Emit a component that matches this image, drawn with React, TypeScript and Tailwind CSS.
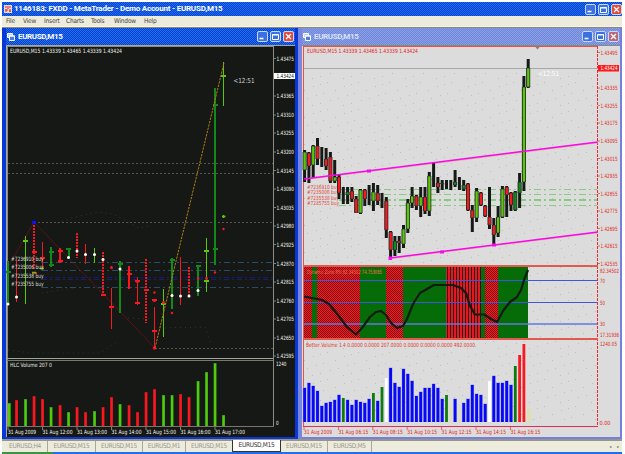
import React from "react";

const FONT = "font-['DejaVu_Sans_Condensed','DejaVu_Sans',sans-serif]";

type Bar = [x: number, top: number, bottom: number, color: string, ticks?: number[], dot?: number];

const G = "#5ac80a";
const D = "#128a18";
const R = "#f81820";

const bars: Bar[] = [
  [8, 261, 304, D, [272], 304],
  [16.5, 260, 302, R, [], 297],
  [25.5, 236, 304, G, [241]],
  [34, 222, 270, R, [252, 273]],
  [42.5, 242, 269, R, [258]],
  [51, 247, 267, D, [252, 265]],
  [60, 248, 263, R, [251, 261]],
  [68.5, 248, 258, D, [249], 257.5],
  [77, 233, 258, R, [], 251],
  [85.5, 244, 264, R, [], 254.5],
  [94.5, 248, 263, G, [], 254.5],
  [103, 252, 296, R, [295], 259.5],
  [111.5, 288, 329, R, [307]],
  [120, 261, 313, D, [264], 269],
  [129, 266, 289, R, [274]],
  [137.5, 277, 305, R, [281, 303]],
  [146, 259, 323, R, [290]],
  [154.5, 307, 348, R, [331, 300]],
  [163.5, 289, 337, G, [304]],
  [172, 258, 309, D, [260], 295.5],
  [180.5, 257, 305, R, [], 296],
  [189, 267, 296, R, [], 296],
  [198, 265, 296, D, [266], 290.5],
  [206.5, 238, 292, G, [251, 281]],
  [215, 88, 265, D, [105, 249]],
  [223.5, 62, 106, G, [76]],
];

const leftVolume: [number, string][] = [
  [403, G], [400, R], [399, G], [396, R], [399, R], [407, G], [405, R], [412, G], [407, R],
  [412, R], [411, G], [407, R], [397, R], [404, G], [405, R], [412, R], [392, R], [389, R],
  [395, G], [395, G], [394, R], [397, R], [381, G], [372, G], [363, G], [415, G],
];

const leftPrices: [number, string][] = [
  [58.5, "1.43475"], [96, "1.43365"], [115, "1.43310"], [133, "1.43255"], [152, "1.43200"],
  [170.5, "1.43145"], [189, "1.43090"], [207.5, "1.43035"], [226, "1.42980"], [244.5, "1.42925"],
  [263.5, "1.42870"], [282, "1.42815"], [301, "1.42760"], [319, "1.42705"], [338, "1.42650"],
  [356, "1.42595"],
];

// wick top, wick bottom, body top, body bottom, body colour
type Candle = [number, number, number?, number?, string?];

const candles: Candle[] = [
  [150, 182, 152, 170, G], [152, 183, 153, 166, R], [145, 178, 146, 165, G], [138, 165, 146, 159, R],
  [147, 167], [148, 170, 159, 166, R], [152, 183, 157, 181, R], [160, 183, 177, 181, G],
  [175, 199, 177, 193, R], [187, 204], [187, 204, 192, 195, D], [187, 202, 191, 199, R],
  [196, 213, 199, 213, R], [189, 214, 190, 213, G], [189, 206, 190, 199, R], [185, 205],
  [183, 211, 192, 201, G], [185, 205, 193, 201, R], [193, 208], [197, 238, 201, 230, R],
  [231, 258, 232, 250, R], [236, 256, 241, 250, D], [236, 253, 241, 243, R], [225, 248, 229, 244, G],
  [199, 233, 203, 229, G], [187, 208, 196, 203, G], [195, 210, 196, 206, R], [187, 217, 197, 206, G],
  [187, 214, 197, 211, R], [172, 216, 176, 211, G], [163, 187], [177, 193, 183, 187, R],
  [180, 190, 183, 184, D], [180, 189], [180, 190], [170, 187, 182, 185, D], [177, 190],
  [180, 191, 185, 189, D], [183, 211, 184, 210, R], [205, 232, 210, 218, R], [188, 222, 191, 218, G],
  [192, 206, 193, 205, R], [205, 217, 206, 216, R], [187, 229, 217, 225, R], [218, 246, 225, 235, R],
  [206, 237, 217, 233, G], [186, 218, 189, 217, G], [186, 217, 187, 195, R], [192, 211, 193, 205, R],
  [191, 211, 192, 210, D], [173, 208, 182, 193, D], [76, 191, 87, 182, G], [59, 88, 68, 87, G],
];

const B = "#0808f8";
const C = "#dedebc";
const W = "#ffffff";
const K = "#107a10";

const rightVolume: [number, string][] = [
  [388, B], [383, B], [386, B], [391, B], [406, B], [403, B], [402, B], [400, B], [395, B],
  [398, K], [400, B], [405, B], [400, B], [402, B], [403, B], [399, B], [393, K], [401, B],
  [387, K], [378, W], [368, B], [383, B], [387, B], [369, B], [374, B], [381, B], [396, B],
  [392, B], [388, B], [388, B], [384, B], [388, B], [399, B], [395, K], [405, C], [399, B],
  [405, C], [403, B], [399, B], [385, B], [394, B], [395, B], [404, B], [381, W], [376, B],
  [383, B], [383, B], [381, B], [385, B], [366, K], [355, R], [344, R],
];

const rightPrices: [number, string][] = [
  [52.5, "1.43495"], [88, "1.43335"], [105.5, "1.43255"], [123, "1.43175"], [141, "1.43095"],
  [158.5, "1.43015"], [176, "1.42935"], [193.5, "1.42855"], [211, "1.42775"], [228.5, "1.42695"],
  [246, "1.42615"], [263.5, "1.42535"],
];

const zones: [number, number, string][] = [
  [304, 312, "url(#check)"], [312, 317, "#066c08"], [317, 360, "url(#check)"],
  [360, 386, "#066c08"], [386, 403, "url(#check)"], [403, 446, "#066c08"],
  [446, 481, "url(#stripe)"], [481, 485, "#066c08"], [485, 498, "url(#check)"],
  [498, 528, "#066c08"],
];

const orders = ["#7236910 buy", "#7235006 buy", "#7235538 buy", "#7235755 buy"];

interface LabelProps {
  x: number;
  y: number;
  w: number;
  fill: string;
  size?: number;
  children: string;
}

// y is the middle of the text line, w its printed width
const Label: React.FC<LabelProps> = ({ x, y, w, fill, size = 5.8, children }) => (
  <text x={x} y={y + size * 0.36} fontSize={size} fill={fill} textLength={w} lengthAdjust="spacingAndGlyphs">
    {children}
  </text>
);

const LeftChart: React.FC = () => (
  <svg viewBox="6 45 289 392" className="block h-[392px] w-[289px] overflow-visible bg-[#151814]">
    <g shapeRendering="crispEdges" fill="none">
      <path d="M6 45.5H295M6.5 45V437" stroke="#aca899" />
      <path d="M7.5 426V46.5H273.5V426" stroke="#8c8c84" />
      <path d="M7 358.5H273" stroke="#9aa89a" />
      <path d="M7 360.5H273M7 426.5H274" stroke="#77776f" />
      <path d="M8 163.5H273M8 173.5H273M34 222.5H273M155 348.5H273" stroke="#56564c" strokeDasharray="2 2" />
      <path d="M42 262.5H273M42 270.5H273M42 287.5H273" stroke="#2d4a68" strokeDasharray="6 3 2 3" />
      <path d="M42 277.5H273M42 279.5H273" stroke="#1a1a78" strokeDasharray="5 3 2 3" />
    </g>
    <path
      d="M57 223L75 217L98 212L113 214L128 222L139 228L150 226M42 293L75 288M8 350L30 353H100L118 341M128 318L150 319M160 328L205 327L211 344"
      fill="none"
      stroke="#33352e"
      strokeDasharray="1 4"
    />
    <path d="M8 267L34 222L155 348" fill="none" stroke="#6a1414" strokeWidth=".8" />
    {bars.map(([x, top, bottom, color, ticks = []], i) => (
      <g key={i} stroke={color} shapeRendering="crispEdges">
        <path
          d={`M${x} ${top}V${bottom}`}
          strokeWidth={color === D ? 2 : 1.3}
          strokeDasharray={[3, 8, 11, 16, 21].includes(i) ? "2 1" : undefined}
        />
        {ticks.map((t) => (
          <path key={t} d={`M${x - 2.5} ${t}H${x + 2.5}`} strokeWidth="1.2" />
        ))}
      </g>
    ))}
    <path d="M155 348L224 63" stroke="#b07c18" strokeDasharray="2.4 1" />
    <g fill={R}>
      <circle cx="111.5" cy="267.5" r="1.5" />
      <circle cx="137.5" cy="281.5" r="1.5" />
      <circle cx="154.5" cy="292.5" r="1.2" />
      <circle cx="154.5" cy="300.5" r="1.5" />
      <circle cx="163.5" cy="302.5" r="1.5" />
      <circle cx="154.5" cy="348" r="1.8" />
      <circle cx="172" cy="313" r="1.2" />
      <circle cx="198" cy="278.5" r="1.2" />
      <circle cx="206.5" cy="278.5" r="1.4" />
      <circle cx="215" cy="272.5" r="1.2" />
      <circle cx="223.5" cy="229" r="1.2" />
    </g>
    <path d="M222 216.5H225.5M223.5 215V218M32 272.5H36M40 268.5H44" stroke={G} strokeWidth="1.5" />
    <circle cx="34" cy="222.5" r="2" fill="#1010ff" />
    {bars.map(([x, , , , , dot]) => dot && <circle key={x} cx={x} cy={dot} r="1.5" fill="#fff" />)}
    {orders.map((order, i) => (
      <Label key={order} x={11} y={[259, 267.2, 276, 284][i]} w={32.5} fill="#dcdcd8">{order}</Label>
    ))}
    <Label x={10} y={51} w={112} fill="#f0f0ec">EURUSD,M15  1.43339 1.43465 1.43339 1.43424</Label>
    <Label x={233.5} y={80.5} w={21} fill="#d8d8d8" size={7}>&lt;12:51</Label>
    {leftPrices.map(([y, price]) => (
      <g key={price}>
        <path d={`M274 ${y}h2`} stroke="#99998f" strokeWidth=".8" />
        <Label x={276.5} y={y} w={17.5} fill="#f4f4f0">{price}</Label>
      </g>
    ))}
    <rect x="274" y="73" width="21" height="6" fill="#fff" />
    <Label x={276.5} y={76} w={17.5} fill="#222">1.43424</Label>
    {leftVolume.map(([top, color], i) => {
      const x = bars[i][0];
      return (
        <g key={x}>
          <rect x={Math.max(8, x - 1.5)} y={top} width="3" height={426 - top} fill={color === G ? D : "#a01418"} />
          <rect x={Math.max(8, x - 1)} y={top + 0.5} width="2.2" height={425.5 - top} fill={color} />
        </g>
      );
    })}
    <Label x={10} y={365} w={42} fill="#e8e8e4">HLC Volume 207 0</Label>
    <Label x={276} y={364} w={10.5} fill="#f4f4f0">1240</Label>
    <Label x={276} y={423} w={2.6} fill="#f4f4f0">0</Label>
    {["2009", "12:00", "13:00", "14:00", "15:00", "16:00", "17:00"].map((t, i) => (
      <g key={t}>
        <path d={`M${8 + i * 34.5} 427v3`} stroke="#99998f" strokeWidth=".8" />
        <Label x={8 + i * 34.5} y={432} w={i ? 30 : 28} fill="#f4f4f0">{`31 Aug ${t}`}</Label>
      </g>
    ))}
  </svg>
);

const RightChart: React.FC = () => (
  <svg viewBox="302 45 318 392" className="block h-[392px] w-[318px] overflow-visible bg-[#dcdcdc]">
    <defs>
      <pattern id="grain" width="31" height="27" patternUnits="userSpaceOnUse">
        <path
          d="M3 5.5h1M10 3.5h1M17 1.5h1M25 9.5h1M6 14.5h1M13 12.5h1M20 19.5h1M28 17.5h1M2 24.5h1M10 22.5h1"
          stroke="#c2beb2"
        />
      </pattern>
      <pattern id="check" width="2" height="2" patternUnits="userSpaceOnUse">
        <path d="M0 0h2v2h-2z" fill="#ff1820" />
        <path d="M0 0h1v1h-1zM1 1h1v1h-1z" fill="#741216" />
      </pattern>
      <pattern id="stripe" width="3" height="2" patternUnits="userSpaceOnUse">
        <path d="M0 0h3v2h-3z" fill="#e01a20" />
        <path d="M0 0h1v2h-1z" fill="#301010" />
      </pattern>
    </defs>
    <rect x="304" y="72" width="294" height="350" fill="url(#grain)" />
    <g shapeRendering="crispEdges" fill="none">
      <path d="M302 45.5H620" stroke="#8c887c" />
      <path d="M303.5 46.5V426M303 46.5H598" stroke="#e85048" />
      <path d="M597.5 46V426" stroke="#e02c38" strokeDasharray="3 1" />
      <path d="M304 68.5H598" stroke="#a4aaa4" />
      <path
        d="M339 189.5H597M339 194.5H597M339 199.5H597M339 200.5H597M339 205.5H597"
        stroke="#86cc84"
        strokeDasharray="7 3 2 3"
      />
    </g>
    <path d="M535 46.5h5l-2.5 3z" fill="#77838c" />
    <path d="M304 179.5L598 142.5M390 258.5L598 232.5" stroke="#e8b49c" strokeWidth="1.6" />
    {orders.map((order, i) => (
      <Label key={order} x={307} y={[186.5, 191.5, 197.5, 203][i]} w={32} fill="#e04840" size={5.6}>{order}</Label>
    ))}
    {candles.map(([top, bottom, bodyTop, bodyBottom, color], i) => {
      const x = 304.5 + i * 4.3;
      return (
        <g key={i}>
          <rect x={x - 1.4} y={top} width="3" height={bottom - top} fill="#161a16" />
          {bodyTop && bodyBottom && (
            <>
              <rect x={x - 1.9} y={bodyTop} width="4" height={bodyBottom - bodyTop} fill="#242c24" />
              <rect x={x - 1} y={bodyTop + 0.4} width="2.3" height={bodyBottom - bodyTop - 0.8} fill={color} />
            </>
          )}
        </g>
      );
    })}
    <path d="M304 179L598 142M390 258L598 232" stroke="#f808f0" strokeWidth="1.5" />
    <path d="M367 169.5h4v3h-4zM440 250.5h4v3h-4zM492 243.5h4v3h-4zM388.5 256.5h3.5v3.5h-3.5z" fill="#f808f0" />
    <Label x={307} y={51} w={111} fill="#e02820">EURUSD,M15  1.43339 1.43465 1.43339 1.43424</Label>
    <Label x={538} y={73} w={21} fill="#fff" size={7}>&lt;12:51</Label>
    {rightPrices.map(([y, price]) => (
      <g key={price}>
        <path d={`M598 ${y}h2`} stroke="#e84840" strokeWidth=".8" />
        <Label x={600.5} y={y} w={17} fill="#e02820">{price}</Label>
      </g>
    ))}
    <rect x="598" y="65" width="21" height="6.5" fill="#fc1818" />
    <Label x={600.5} y={68.3} w={17} fill="#fff">1.43424</Label>

    <g shapeRendering="crispEdges">
      {zones.map(([from, to, fill]) => (
        <rect key={from} x={from} y={267} width={to - from} height={72} fill={fill} />
      ))}
      <path d="M303 266H598M303 339H598" stroke="#e05a50" strokeWidth="2" />
      <path d="M304 280.5H597M304 302.5H597" stroke="#4054e4" />
      <path d="M304 323.5H597M304 324.5H597" stroke="#6078e0" strokeOpacity=".75" />
    </g>
    <path
      d="M304 296.5L312 298L322 300L329 304L338 315L347 327L356 334.5L362 328L370 317L376 312L381 311L386 315L391 323L397 328L403 326L407 319L413 304L420 293L427 289L434 285H453L461 288L466 293L470 306L475 314.5H484L491 319L497 322L503 311L510 302L517 297L521 290L524 280L528 270"
      fill="none"
      stroke="#141a14"
      strokeWidth="2.2"
      strokeLinejoin="round"
    />
    <Label x={307} y={272} w={75} fill="#f07048">Dynamic Zone RSI 82.34502 74.753065</Label>
    <Label x={600} y={270.5} w={19} fill="#e02820">82.34502</Label>
    <Label x={600} y={280.5} w={5} fill="#e02820">70</Label>
    <Label x={600} y={302.5} w={5} fill="#e02820">50</Label>
    <Label x={600} y={324} w={5} fill="#e02820">30</Label>
    <Label x={600} y={334.5} w={19} fill="#e02820">17.31936</Label>

    {rightVolume.map(([top, color], i) => {
      const x = 304.5 + i * 4.3;
      return (
        <g key={i}>
          {color === B && <rect x={x - 1.7} y={top - 0.5} width="3.6" height={422.5 - top} fill="#9a9ee0" />}
          <rect x={x - 1.3} y={top} width="2.8" height={422 - top} fill={color} />
        </g>
      );
    })}
    <rect x="526.5" y="408" width="5" height="15" rx="2" fill={C} />
    <path d="M303 426.5H598" stroke="#e02c58" shapeRendering="crispEdges" />
    <Label x={306} y={345} w={169} fill="#e03830">
      Better Volume 1.4 0.0000 0.0000 207.0000 0.0000 0.0000 0.0000 492.0000
    </Label>
    <Label x={600} y={343.5} w={17} fill="#e02820">1240.05</Label>
    <Label x={599.5} y={422.5} w={11} fill="#e02820">0.00</Label>
    {["2009", "06:15", "08:15", "10:15", "12:15", "14:15", "16:15"].map((t, i) => (
      <g key={t}>
        <path d={`M${304 + i * 34.4} 427v3`} stroke="#e84840" strokeWidth=".8" />
        <Label x={304 + i * 34.4} y={432} w={i ? 30 : 28} fill="#e02820">{`31 Aug ${t}`}</Label>
      </g>
    ))}
  </svg>
);

const WindowButtons: React.FC<{ faded?: boolean }> = ({ faded = false }) => {
  const base = "flex h-[11px] w-[11px] items-center justify-center rounded-[2px] border border-[#c8d8f8]";
  return (
    <div className="flex gap-[2px]">
      <span className={`${base} bg-[#3a70e0]`}>
        <svg viewBox="0 0 9 9" className="h-[9px] w-[9px]">
          <path d="M1.5 6.5h4" stroke="#fff" strokeWidth="1.6" />
        </svg>
      </span>
      <span className={`${base} bg-[#3a70e0]`}>
        <svg viewBox="0 0 9 9" className="h-[9px] w-[9px]">
          <path d="M1.5 2.5h6v5h-6zM1.5 3h6" fill="none" stroke="#fff" />
        </svg>
      </span>
      <span className={`${base} ${faded ? "bg-[#b86878]" : "bg-[#e04c38]"}`}>
        <svg viewBox="0 0 9 9" className="h-[9px] w-[9px]">
          <path d="M2 2l5 5M7 2l-5 5" stroke="#fff" strokeWidth="1.3" />
        </svg>
      </span>
    </div>
  );
};

const ChartIcon: React.FC = () => (
  <svg viewBox="0 0 8 8" className="h-2 w-2">
    <path d="M.5.5h5v4h-5z" fill="#b8d4fc" stroke="#fff" />
    <path d="M2.5 3h5v4.5h-5z" fill="#4a80d8" stroke="#fff" />
    <path d="M2 3h6" stroke="#fff" />
  </svg>
);

const ChartWindow: React.FC<{ active?: boolean; children: React.ReactNode }> = ({ active = false, children }) => (
  <section
    className={`flex h-[411px] shrink-0 flex-col border-l-4 ${
      active ? "w-[296px] border-[#0838d8] bg-[#0838d8] pr-[3px]" : "w-[324px] border-[#7886de] bg-[#7480dc] pr-[2px]"
    }`}
  >
    <header
      className={`flex h-[17px] shrink-0 items-center bg-[length:2px_2px] pr-[1px] pl-[1px] ${
        active
          ? "bg-[repeating-conic-gradient(#0840d4_0_25%,#2070ec_0_50%)]"
          : "bg-[repeating-conic-gradient(#7484dc_0_25%,#86a4e4_0_50%)]"
      }`}
    >
      <ChartIcon />
      <span
        className={`ml-[3px] flex-1 font-['Roboto',sans-serif] text-[8px] leading-none font-bold tracking-[-0.35px] ${
          active ? "text-white" : "text-[#d8e0f8]"
        }`}
      >
        EURUSD,M15
      </span>
      <WindowButtons faded={!active} />
    </header>
    {children}
  </section>
);

const menu = [
  ["File", "w-[17px]"],
  ["View", "w-[21px]"],
  ["Insert", "w-[22px]"],
  ["Charts", "w-[25px]"],
  ["Tools", "w-[23px]"],
  ["Window", "w-[30px]"],
  ["Help", "w-[20px]"],
];

const tabs = [
  ["EURUSD,H4", "w-[45px]"],
  ["EURUSD,M15", "w-[48px]"],
  ["EURUSD,M15", "w-[47px]"],
  ["EURUSD,M1", "w-[43px]"],
  ["EURUSD,M15", "w-[46px]"],
  ["EURUSD,M15", "w-[49px]"],
  ["EURUSD,M15", "w-[47px]"],
  ["EURUSD,M5", "w-[44px]"],
];

export default function App() {
  return (
    <div className={`h-[454px] w-[625px] overflow-hidden bg-white pt-[2px] pl-[2px] ${FONT}`}>
      <div className="flex w-[620px] flex-col">
        <header className="flex h-[14px] items-center bg-[repeating-conic-gradient(#0840d4_0_25%,#2070ec_0_50%)] bg-[length:2px_2px] pl-[2px]">
          <svg viewBox="0 0 8 8" className="h-2 w-2">
            <path d="M0 0h8v8H0z" fill="#f0d8d4" />
            <path d="M1 2h2M4 1v3M5 2h2M1 5h3M2 4v3M5 6h2M6 4v3" stroke="#d83030" />
          </svg>
          <span className="ml-[2px] flex-1 font-['Roboto',sans-serif] text-[8px] leading-none font-bold tracking-[-0.22px] whitespace-pre text-white">
            1146183: FXDD - MetaTrader - Demo Account - EURUSD,M15
          </span>
          <WindowButtons />
        </header>

        <nav className="flex h-[11px] items-center border-b border-[#f4f4ec] bg-[#ecebdc] pl-[4px] text-[6.5px] leading-none tracking-[-0.2px] text-[#444]">
          {menu.map(([label, width]) => (
            <span key={label} className={width}>{label}</span>
          ))}
        </nav>

        <main className="flex border-t border-[#8c887c]">
          <ChartWindow active>
            <LeftChart />
          </ChartWindow>
          <ChartWindow>
            <RightChart />
          </ChartWindow>
        </main>

        <footer className="flex h-[13px] border-t-2 border-[#98968c] bg-[#ecebdc] pl-[1px] text-[6.5px] leading-none text-[#9a988c]">
          {tabs.map(([label, width], i) => (
            <span
              key={i}
              className={`flex items-center justify-center ${width} ${
                i === 5 ? "-mt-[1px] border border-t-0 border-[#333] bg-white text-[#333]" : i === 4 ? "" : "border-r border-[#aaa89c]"
              }`}
            >
              <span className="tracking-[-0.3px]">{label}</span>
            </span>
          ))}
          <span className="flex flex-1 items-center justify-end gap-[6px] pr-[3px] text-[4px] text-[#555]">
            <span>◂</span>
            <span>▸</span>
          </span>
        </footer>
        <div className="flex h-[2px] bg-[#2070ec]">
          <span className="w-[51px] bg-[#3c9440]" />
        </div>
      </div>
    </div>
  );
}
